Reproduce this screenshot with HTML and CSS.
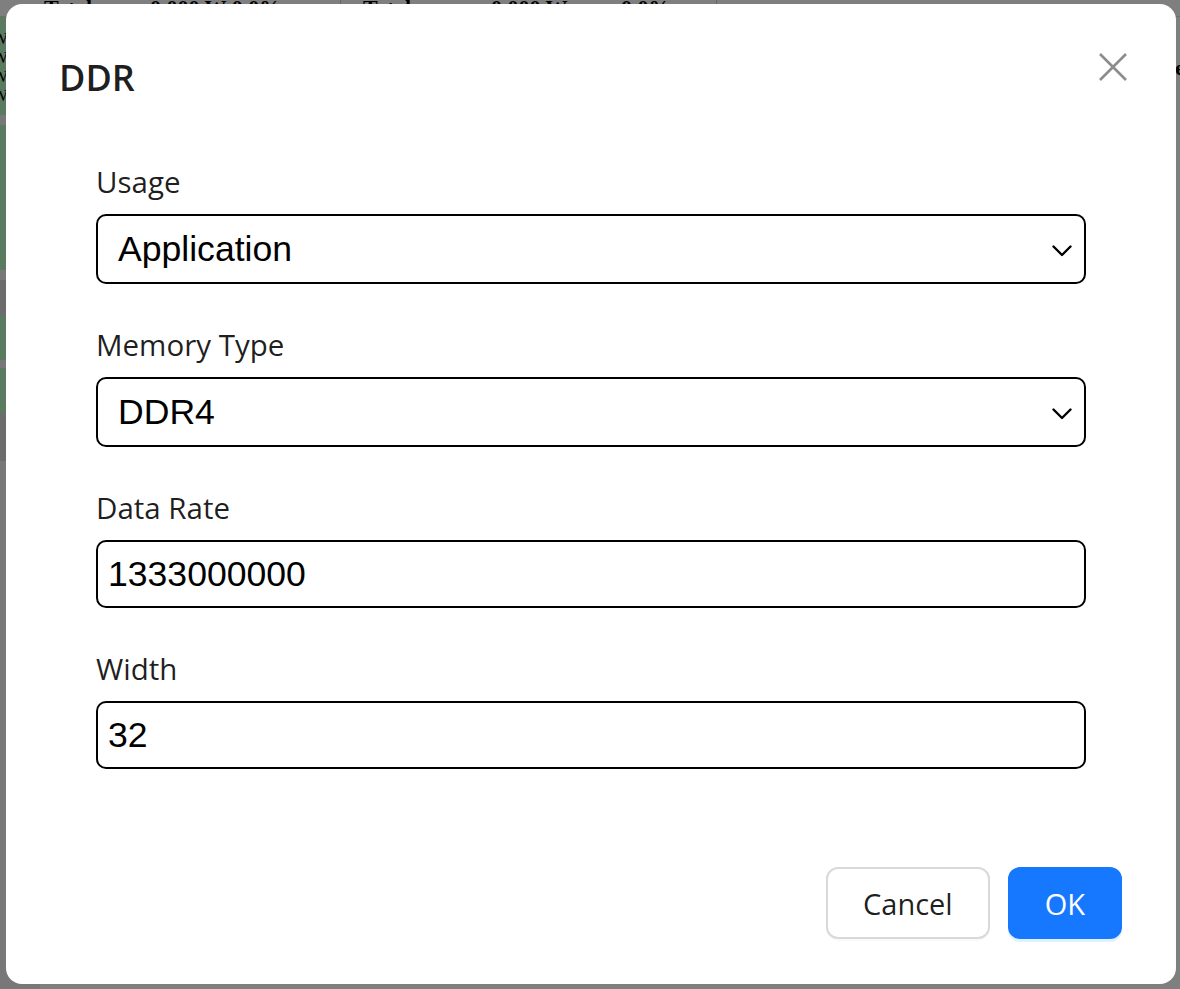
FILE: index.html
```html
<!DOCTYPE html>
<html lang="en">
<head>
<meta charset="utf-8">
<title>DDR</title>
<link rel="stylesheet" href="styles.css">
</head>
<body>
<div class="page">
  <div class="page-top">
    <span class="cell c1">Total</span><span class="cell c2">0.000 W 0.0%</span>
    <span class="cell c3">Total</span><span class="cell c4">0.000 W</span><span class="cell c5">0.0%</span>
  </div>
  <div class="page-body">
    <div class="side">
      <div class="blk green h1"><span>W</span><span>W</span><span>W</span><span>W</span></div>
      <div class="blk grey h2"></div>
      <div class="blk green h3"></div>
      <div class="blk grey h2"></div>
      <div class="blk dark h4"></div>
      <div class="blk green h5"></div>
      <div class="blk grey h6"></div>
      <div class="blk green h5"></div>
      <div class="blk dark h7"></div>
      <div class="blk grey fill"></div>
    </div>
    <div class="mid"></div>
    <div class="right"><span class="rtext">e</span></div>
  </div>
</div>

<div class="mask">
  <div class="modal" role="dialog" aria-labelledby="dlg-title">
    <div class="modal-header">
      <h2 class="title" id="dlg-title">DDR</h2>
      <button class="close" aria-label="Close">
        <svg width="28" height="28" viewBox="0 0 28 28"><path d="M1 1 L27 27 M27 1 L1 27" stroke="#8c8c8c" stroke-width="2.6" fill="none"/></svg>
      </button>
    </div>
    <form class="form">
      <div class="field">
        <label class="label">Usage</label>
        <div class="select"><span>Application</span>
          <svg class="chev" width="20" height="12" viewBox="0 0 20 12"><path d="M1.5 1.5 L10 10 L18.5 1.5" stroke="#000" stroke-width="2.4" fill="none" stroke-linecap="round" stroke-linejoin="round"/></svg>
        </div>
      </div>
      <div class="field">
        <label class="label">Memory Type</label>
        <div class="select"><span>DDR4</span>
          <svg class="chev" width="20" height="12" viewBox="0 0 20 12"><path d="M1.5 1.5 L10 10 L18.5 1.5" stroke="#000" stroke-width="2.4" fill="none" stroke-linecap="round" stroke-linejoin="round"/></svg>
        </div>
      </div>
      <div class="field">
        <label class="label">Data Rate</label>
        <input class="input" type="text" value="1333000000">
      </div>
      <div class="field last">
        <label class="label">Width</label>
        <input class="input" type="text" value="32">
      </div>
    </form>
    <div class="footer">
      <button class="btn btn-default">Cancel</button>
      <button class="btn btn-primary">OK</button>
    </div>
  </div>
</div>
</body>
</html>
```

FILE: styles.css
```css
html, body {
  margin: 0;
  padding: 0;
}
body {
  width: 1180px;
  height: 989px;
  overflow: hidden;
  background: #fff;
  font-family: "Liberation Serif", serif;
}

/* background page (behind the mask) */
.page {
  display: flex;
  flex-direction: column;
  height: 989px;
  background: #ffffff;
}
.page-top {
  display: flex;
  height: 16px;
  line-height: 16px;
  font-size: 22px;
  font-weight: bold;
  white-space: nowrap;
  overflow: hidden;
  border-bottom: 1px solid #ddd;
}
.cell { display: block; }
.c1 { padding-left: 44px; width: 106px; }
.c2 { width: 190px; border-right: 1px solid #ccc; }
.c3 { padding-left: 22px; width: 128px; }
.c4 { width: 130px; }
.c5 { width: 95px; border-right: 1px solid #ccc; }

.page-body {
  flex: 1;
  display: flex;
}
.side {
  width: 40px;
  display: flex;
  flex-direction: column;
}
.blk { display: flex; flex-direction: column; }
.green { background: #b4f6c0; }
.grey { background: #f0f0f0; }
.dark { background: #d8d8d8; }
.h1 {
  height: 98px;
  padding-top: 12px;
  box-sizing: border-box;
  font-size: 17px;
  line-height: 19px;
  color: #000;
}
.h1 span { margin-left: -8px; }
.h2 { height: 10px; }
.h3 { height: 145px; }
.h4 { height: 35px; }
.h5 { height: 45px; }
.h6 { height: 8px; }
.h7 { height: 48px; }
.fill { flex: 1; }
.mid { flex: 1; }
.right {
  width: 30px;
  padding-top: 38px;
  padding-left: 25px;
  box-sizing: border-box;
  font-size: 22px;
  font-weight: bold;
}

/* mask + modal */
.mask {
  position: fixed;
  inset: 0;
  background: rgba(0, 0, 0, 0.5);
  display: flex;
  padding: 4px 4px 5px 6px;
  box-sizing: border-box;
}
.modal {
  flex: 1;
  background: #fff;
  border-radius: 16px;
  padding: 50px 54px 45px 53px;
  display: flex;
  flex-direction: column;
  font-family: "Open Sans", "Noto Sans", sans-serif;
  color: rgba(0, 0, 0, 0.88);
}
.modal-header {
  display: flex;
  justify-content: space-between;
  align-items: flex-start;
}
.title {
  margin: 0;
  font-size: 36px;
  font-weight: 600;
  line-height: 48px;
  color: rgba(0, 0, 0, 0.88);
}
.close {
  width: 40px;
  height: 40px;
  margin: -7px -11px 0 0;
  padding: 0;
  border: 0;
  background: none;
  display: flex;
  align-items: center;
  justify-content: center;
}

.form {
  margin: 63px 36px 0 37px;
  display: flex;
  flex-direction: column;
}
.field {
  display: flex;
  flex-direction: column;
  margin-bottom: 44px;
}
.field.last { margin-bottom: 0; }
.label {
  font-size: 29.5px;
  line-height: 34px;
  margin-bottom: 15px;
  color: rgba(0, 0, 0, 0.88);
}
.select {
  height: 70px;
  box-sizing: border-box;
  border: 2px solid #000;
  border-radius: 10px;
  padding: 0 12px 0 20px;
  display: flex;
  align-items: center;
  justify-content: space-between;
  font-family: "Liberation Sans", Arial, sans-serif;
  font-size: 35.6px;
  color: #000;
}
.chev { margin-top: 4px; }
.input {
  height: 68px;
  box-sizing: border-box;
  border: 2px solid #000;
  border-radius: 10px;
  padding: 0 10px;
  font-family: "Liberation Sans", Arial, sans-serif;
  font-size: 35.6px;
  color: #000;
  background: #fff;
  outline: none;
}

.footer {
  margin-top: 98px;
  display: flex;
  justify-content: flex-end;
  gap: 18px;
}
.btn {
  height: 72px;
  border-radius: 12px;
  font-family: "Open Sans", "Noto Sans", sans-serif;
  font-size: 29px;
  cursor: pointer;
}
.btn-default {
  padding: 0 35px;
  background: #fff;
  border: 2px solid #d9d9d9;
  color: rgba(0, 0, 0, 0.88);
  box-shadow: 0 2px 0 rgba(0, 0, 0, 0.02);
}
.btn-primary {
  padding: 0 35px;
  background: #1677ff;
  border: 2px solid #1677ff;
  color: #fff;
  box-shadow: 0 3px 0 rgba(5, 145, 255, 0.12);
}
```
